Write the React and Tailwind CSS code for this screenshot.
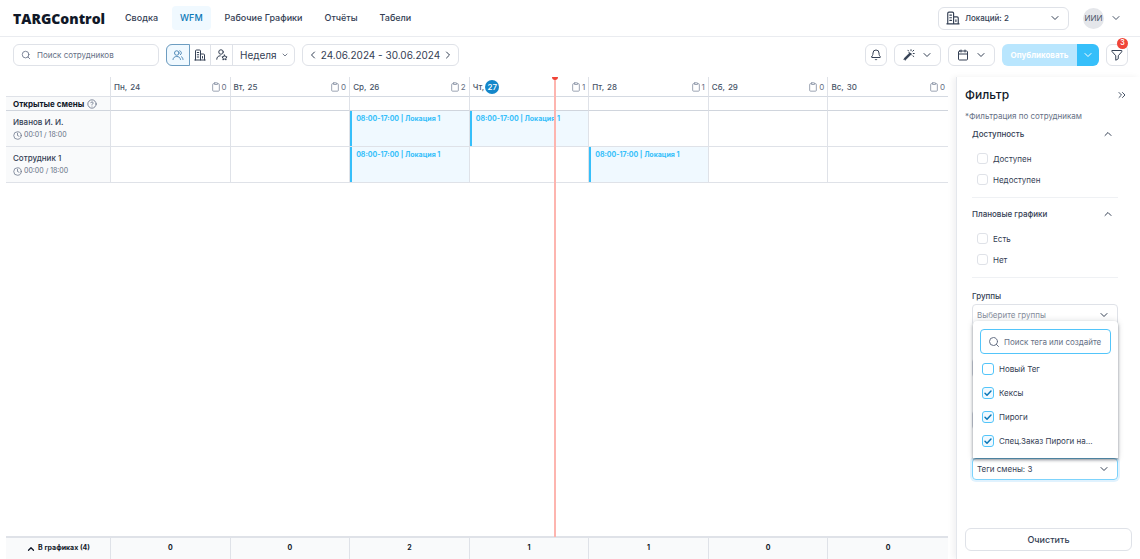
import { useState } from "react";
import {
  Bell,
  Calendar,
  ChevronDown,
  ChevronLeft,
  ChevronRight,
  ChevronsRight,
  ChevronUp,
  CircleHelp,
  Clipboard,
  Clock,
  Search,
} from "lucide-react";

const navItems = ["Сводка", "WFM", "Рабочие Графики", "Отчёты", "Табели"];

const days = [
  { name: "Пн", date: 24, open: 0, total: 0 },
  { name: "Вт", date: 25, open: 0, total: 0 },
  { name: "Ср", date: 26, open: 2, total: 2 },
  { name: "Чт", date: 27, open: 1, total: 1, today: true },
  { name: "Пт", date: 28, open: 1, total: 1 },
  { name: "Сб", date: 29, open: 0, total: 0 },
  { name: "Вс", date: 30, open: 0, total: 0 },
];

const employees = [
  { name: "Иванов И. И.", hours: "00:01 / 18:00", shifts: [26, 27] },
  { name: "Сотрудник 1", hours: "00:00 / 18:00", shifts: [26, 28] },
];

const initialTags = [
  { name: "Новый Тег", checked: false },
  { name: "Кексы", checked: true },
  { name: "Пироги", checked: true },
  { name: "Спец.Заказ Пироги на...", checked: true },
];

function BuildingIcon({ className }) {
  return (
    <svg viewBox="0 0 24 24" className={className} fill="none" stroke="currentColor" strokeWidth="2" strokeLinecap="round" strokeLinejoin="round">
      <path d="M1.500 22h21M3 22V4a2 2 0 0 1 2-2h6a2 2 0 0 1 2 2v18M13 10h6a2 2 0 0 1 2 2v10" />
      <path d="M6.500 7h3M6.500 11.500h3M6.500 16h3M17 15v3" />
    </svg>
  );
}

function UsersIcon({ className }) {
  return (
    <svg viewBox="0 0 24 24" className={className} fill="none" stroke="currentColor" strokeWidth="2" strokeLinecap="round" strokeLinejoin="round">
      <circle cx="9.5" cy="8" r="4.5" />
      <path d="M2 21c.4-4 3.4-6 7.500-6s7 2 7.500 6M15.500 3.600a4.500 4.500 0 0 1 1.300 8M19 15.500c1.800 1 2.800 3 3 5.500" />
    </svg>
  );
}

function UserStarIcon({ className }) {
  return (
    <svg viewBox="0 0 24 24" className={className} fill="none" stroke="currentColor" strokeWidth="2" strokeLinecap="round" strokeLinejoin="round">
      <circle cx="10" cy="6" r="4.5" />
      <path d="M1.500 20.500c0-4 2.500-7 7-7" />
      <path d="m17 12 1.600 3.300 3.600.5-2.600 2.500.6 3.600-3.200-1.700-3.200 1.700.6-3.600-2.600-2.500 3.600-.5z" />
    </svg>
  );
}

function WandIcon({ className }) {
  return (
    <svg viewBox="0 0 24 24" className={className} fill="none" stroke="currentColor" strokeWidth="2" strokeLinecap="round" strokeLinejoin="round">
      <path d="m2 19.500 12-12 2.500 2.500-12 12z" fill="currentColor" />
      <path d="m12 7 5 5M10 2.500l1 1.500M16 1.500v2M21.500 2.500l-2 2M22.500 9h-2M21.500 15l-1.500-1" />
    </svg>
  );
}

function FunnelIcon({ className }) {
  return (
    <svg viewBox="0 0 24 24" className={className} fill="none" stroke="currentColor" strokeWidth="2" strokeLinecap="round" strokeLinejoin="round">
      <path d="M2.500 3h19v2.500l-7 8v6l-5 3v-9l-7-8z" />
    </svg>
  );
}

function Header() {
  return (
    <header className="flex h-[37px] items-center border-b border-[#eaecf0] pr-4 pl-[13px]">
      <a href="#" className="w-24 shrink-0 font-['Open_Sans','Noto_Sans',sans-serif] text-[14px] font-extrabold text-[#101828]">
        TARGControl
      </a>
      <nav className="ml-2 flex flex-1 gap-1.5 text-[9px] font-medium">
        {navItems.map((item) => (
          <a
            key={item}
            href="#"
            className={
              item === "WFM"
                ? "rounded bg-[#f0f9ff] px-2 py-1 leading-4 text-[#0b77b7]"
                : "rounded px-2 py-1 leading-4 text-[#344054]"
            }
          >
            {item}
          </a>
        ))}
      </nav>
      <div className="relative flex h-[23px] w-[131px] items-center rounded-md border border-[#dfe2e8] text-[#344054]">
        <BuildingIcon className="pointer-events-none absolute left-[7px] size-3.5" />
        <select aria-label="Локации" className="h-full w-full appearance-none pl-[26px] text-[8px] font-medium outline-none">
          <option>Локаций: 2</option>
        </select>
        <ChevronDown className="pointer-events-none absolute right-[7px] size-3" />
      </div>
      <button className="ml-3.5 flex items-center gap-1.5 pr-0.5 text-[#475467]">
        <span className="flex size-[21px] items-center justify-center rounded-full bg-[#e4e6ea] text-[8px]">ИИИ</span>
        <ChevronDown className="size-3" />
      </button>
    </header>
  );
}

function Toolbar() {
  return (
    <div className="flex h-10 items-start pt-[7px] pr-3 pl-[13px] text-[#344054]">
      <label className="flex h-[22px] w-[146px] items-center gap-1.5 rounded-md border border-[#dfe2e8] px-[7px]">
        <Search className="size-2.5 shrink-0 text-[#667085]" />
        <input aria-label="Поиск сотрудников" placeholder="Поиск сотрудников" className="w-full min-w-0 text-[8px] outline-none placeholder:text-[#667085]" />
      </label>

      <div className="ml-[7px] flex h-[22px] rounded-md border border-[#dfe2e8]">
        <button aria-label="Сотрудники" className="-m-px flex w-6 items-center justify-center rounded-l-md border border-[#6d9dc1] bg-[#f0f9ff] text-[#528bb8]">
          <UsersIcon className="size-3" />
        </button>
        <button aria-label="Локации" className="flex w-[22px] items-center justify-center border-r border-[#dfe2e8]">
          <BuildingIcon className="size-3" />
        </button>
        <button aria-label="Должности" className="flex w-[22px] items-center justify-center border-r border-[#dfe2e8]">
          <UserStarIcon className="size-3" />
        </button>
        <div className="relative flex w-[61px] items-center">
          <select aria-label="Период" className="h-full w-full appearance-none pl-[7px] text-[10px] outline-none">
            <option>Неделя</option>
            <option>Месяц</option>
          </select>
          <ChevronDown className="pointer-events-none absolute right-[5px] size-2" />
        </div>
      </div>

      <div className="ml-[7px] flex h-[22px] w-[157px] items-center justify-between rounded-md border border-[#dfe2e8] px-1">
        <button aria-label="Назад">
          <ChevronLeft className="size-3" />
        </button>
        <span className="text-[10px]">24.06.2024 - 30.06.2024</span>
        <button aria-label="Вперёд">
          <ChevronRight className="size-3" />
        </button>
      </div>

      <div className="ml-auto flex gap-[7px]">
        <button aria-label="Уведомления" className="flex size-[22px] items-center justify-center rounded-md border border-[#dfe2e8]">
          <Bell className="size-3" />
        </button>
        <button aria-label="Автозаполнение" className="flex h-[22px] w-[47px] items-center justify-center gap-1.5 rounded-md border border-[#dfe2e8]">
          <WandIcon className="size-3" />
          <ChevronDown className="size-3" />
        </button>
        <button aria-label="Календарь" className="flex h-[22px] w-[47px] items-center justify-center gap-1.5 rounded-md border border-[#dfe2e8]">
          <Calendar className="size-3" />
          <ChevronDown className="size-3" />
        </button>
        <div className="flex h-[22px] overflow-hidden rounded-md text-white">
          <button className="w-[75px] bg-[#b9e6fe] text-[8px] font-bold">Опубликовать</button>
          <button aria-label="Ещё" className="flex w-[22px] items-center justify-center bg-[#36bffa]">
            <ChevronDown className="size-3" />
          </button>
        </div>
        <button aria-label="Фильтр" className="relative flex size-[22px] items-center justify-center rounded-md border border-[#dfe2e8]">
          <FunnelIcon className="size-3" />
          <span className="absolute -top-[7px] -right-px flex size-[11px] items-center justify-center rounded-full bg-[#f04438] text-[7px] font-semibold text-white">
            3
          </span>
        </button>
      </div>
    </div>
  );
}

function Schedule() {
  return (
    <div className="relative ml-1.5 flex min-w-0 flex-1 flex-col">
      <table className="w-full table-fixed border-separate border-spacing-0 text-[8px] text-[#475467]">
        <thead>
          <tr className="h-5">
            <th className="w-[105px] border-r border-b border-[#dfe2e8]" />
            {days.map((day) => (
              <th key={day.date} className="border-b border-[#d5dae2] p-0 font-medium not-last:border-r not-last:border-r-[#dfe2e8]">
                <div className="flex h-[19px] items-center px-[3px]">
                  {day.name},
                  {day.today ? (
                    <span className="ml-px flex size-3.5 items-center justify-center rounded-full bg-[#1487ca] text-white">{day.date}</span>
                  ) : (
                    <span className="ml-[3px]">{day.date}</span>
                  )}
                  <span className="ml-auto flex items-center gap-px font-normal text-[#667085]">
                    <Clipboard className="size-2.5 text-[#8892a3]" />
                    {day.open}
                  </span>
                </div>
              </th>
            ))}
          </tr>
        </thead>
        <tbody>
          <tr className="h-3.5">
            <th className="border-r border-b border-[#d0d5dd] border-r-[#dfe2e8] bg-[#f9fafb] p-0 text-left">
              <div className="flex h-[13px] items-center gap-px pl-[7px] text-[8px] font-bold text-[#101828]">
                Открытые смены
                <CircleHelp className="ml-0.5 size-2.5 text-[#667085]" />
              </div>
            </th>
            {days.map((day) => (
              <td key={day.date} className="border-b border-[#d0d5dd] p-0 not-last:border-r not-last:border-r-[#dfe2e8]" />
            ))}
          </tr>
          {employees.map((employee) => (
            <tr key={employee.name} className="h-9">
              <th className="border-r border-b border-[#dfe2e8] bg-[#f9fafb] p-0 pl-[7px] text-left font-normal">
                <div className="font-medium leading-[13px] text-[#344054]">{employee.name}</div>
                <div className="flex items-center gap-0.5 text-[7px] leading-3 text-[#667085]">
                  <Clock className="size-[9px]" />
                  {employee.hours}
                </div>
              </th>
              {days.map((day) => (
                <td key={day.date} className="h-9 border-b border-[#dfe2e8] p-0 align-top not-last:border-r">
                  {employee.shifts.includes(day.date) && (
                    <button className="flex h-[35px] w-full items-start border-l-2 border-[#36bffa] bg-[#f0f9ff] pt-[3px] pl-1 text-left text-[7px] leading-[10px] font-bold text-[#36bffa]">
                      08:00-17:00 | Локация 1
                    </button>
                  )}
                </td>
              ))}
            </tr>
          ))}
        </tbody>
      </table>

      {/* current time */}
      <div className="absolute top-0 bottom-[22px] left-[58.2%] w-0.5 bg-[#fdb5af]">
        <div className="-ml-0.5 h-[3px] w-1.5 rounded-b-full bg-[#f04438]" />
      </div>

      <table className="mt-auto w-full table-fixed border-separate border-spacing-0 border-t-2 border-[#dfe2e8] bg-[#f9fafb] text-[7px] text-[#101828]">
        <tbody>
          <tr className="h-[21px]">
            <th className="w-[105px] border-r border-[#dfe2e8] p-0 font-bold">
              <button className="mx-auto flex items-center gap-0.5">
                <ChevronUp className="size-2.5" strokeWidth={3} />
                В графиках (4)
              </button>
            </th>
            {days.map((day) => (
              <td key={day.date} className="border-[#dfe2e8] p-0 text-center font-bold not-last:border-r">
                {day.total}
              </td>
            ))}
          </tr>
        </tbody>
      </table>
    </div>
  );
}

function FilterSection({ title, options }) {
  return (
    <section className="mb-2 border-b border-[#eff1f4] pb-[7px]">
      <button className="flex h-4 w-full items-center justify-between font-medium">
        {title}
        <ChevronUp className="mr-1 size-3" />
      </button>
      <div className="mt-1.5">
        {options.map((option) => (
          <label key={option} className="flex h-[21px] items-center gap-[5px] pl-[5px]">
            <input type="checkbox" className="size-[11px] appearance-none rounded-[3px] border border-[#dfe2e8]" />
            {option}
          </label>
        ))}
      </div>
    </section>
  );
}

function TagMenu({ tags, onToggle }) {
  return (
    <div className="absolute right-0 bottom-full left-px rounded-t bg-white px-[7px] pt-2 pb-[5px] shadow-[0_2px_3px_rgba(16,24,40,0.45),0_0_6px_rgba(16,24,40,0.15)]">
      <label className="flex h-[25px] items-center gap-1 rounded border border-[#53c5fa] px-[7px]">
        <Search className="size-3 shrink-0 text-[#667085]" />
        <input aria-label="Поиск тега" placeholder="Поиск тега или создайте" className="w-full min-w-0 text-[8px] outline-none placeholder:text-[#667085]" />
      </label>
      <div className="mt-[3px]">
        {tags.map((tag) => (
          <label key={tag.name} className="flex h-6 items-center gap-[5px] pl-0.5">
            <span className="relative flex size-3 shrink-0">
              <input
                type="checkbox"
                checked={tag.checked}
                onChange={() => onToggle(tag.name)}
                className="size-3 appearance-none rounded-[3px] border border-[#53c5fa] checked:bg-[#f0f9ff]"
              />
              {tag.checked && (
                <svg viewBox="0 0 12 12" className="pointer-events-none absolute inset-0 size-3" fill="none" stroke="#0b77b7" strokeWidth="1.500" strokeLinecap="round" strokeLinejoin="round">
                  <path d="m3 6.200 2 2 4-4.200" />
                </svg>
              )}
            </span>
            {tag.name}
          </label>
        ))}
      </div>
    </div>
  );
}

function FilterPanel() {
  const [tags, setTags] = useState(initialTags);
  const selected = tags.filter((tag) => tag.checked).length;

  function toggleTag(name) {
    setTags((current) =>
      current.map((tag) => (tag.name === name ? { ...tag, checked: !tag.checked } : tag))
    );
  }

  return (
    <aside className="ml-2 flex w-[184px] shrink-0 flex-col border-l border-[#e4e7ec] px-2 pt-2 pb-2 text-[8px] text-[#344054] shadow-[-3px_0_6px_rgba(16,24,40,0.06)]">
      <div className="flex h-5 items-center justify-between">
        <h2 className="text-[12px] font-medium text-[#101828]">Фильтр</h2>
        <button aria-label="Свернуть">
          <ChevronsRight className="mr-1 size-3 text-[#475467]" />
        </button>
      </div>
      <p className="mt-1 leading-[14px] text-[#667085]">*Фильтрация по сотрудникам</p>

      <div className="mt-[3px] mr-3.5 ml-[7px]">
        <FilterSection title="Доступность" options={["Доступен", "Недоступен"]} />
        <FilterSection title="Плановые графики" options={["Есть", "Нет"]} />

        <label className="mt-2.5 block">
          <span className="block h-4 leading-4 font-medium">Группы</span>
          <span className="relative flex h-[22px] items-center rounded border border-[#dfe2e8]">
            <select className="h-full w-full appearance-none pl-1 text-[#858d9b] outline-none">
              <option>Выберите группы</option>
            </select>
            <ChevronDown className="pointer-events-none absolute right-[7px] size-3" />
          </span>
        </label>

        <div className="mt-8 h-5 rounded border border-[#d0d5dd]" />
        <div className="mt-8 h-5 rounded border border-[#d0d5dd]" />

        <div className="relative mt-7">
          <button
            aria-expanded="true"
            className="flex h-[22px] w-full items-center justify-between rounded border border-[#7dd3fc] pr-[7px] pl-1 shadow-[0_0_0_2px_#e0f2fe]"
          >
            Теги смены: {selected}
            <ChevronDown className="size-3" />
          </button>
          <TagMenu tags={tags} onToggle={toggleTag} />
        </div>
      </div>

      <button className="mt-auto h-[23px] shrink-0 rounded-md border border-[#dfe2e8] text-[9px] font-medium">Очистить</button>
    </aside>
  );
}

export default function App() {
  return (
    <div className="flex min-h-screen flex-col bg-white font-['Inter','Liberation_Sans',sans-serif]">
      <Header />
      <Toolbar />
      <main className="flex flex-1">
        <Schedule />
        <FilterPanel />
      </main>
    </div>
  );
}
